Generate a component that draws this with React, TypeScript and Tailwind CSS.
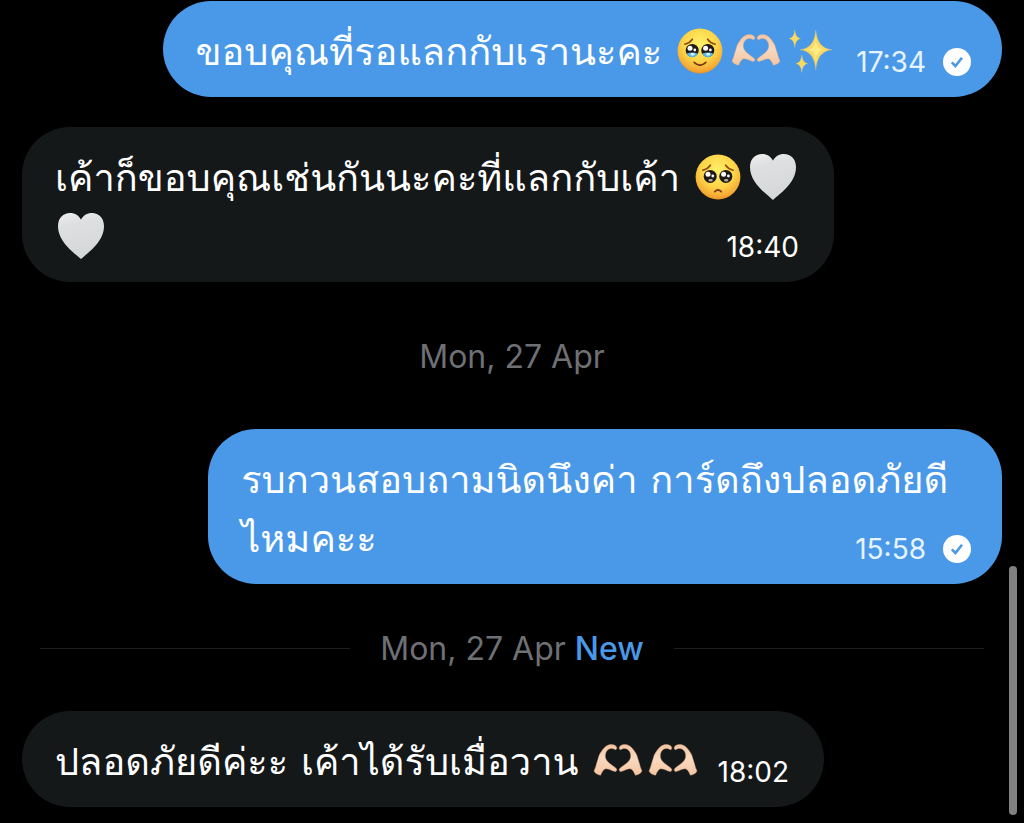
import { useId, type ReactNode } from 'react'
import clsx from 'clsx'

type EmojiName = 'tears' | 'pleading' | 'hands' | 'sparkles' | 'heart'

interface Line {
  text?: string
  emojis?: EmojiName[]
}

interface Message {
  id: number
  mine?: boolean
  lines: Line[]
  time: string
}

const FIRST_DAY: Message[] = [
  {
    id: 1,
    mine: true,
    lines: [{ text: 'ขอบคุณที่รอแลกกับเรานะคะ', emojis: ['tears', 'hands', 'sparkles'] }],
    time: '17:34',
  },
  {
    id: 2,
    lines: [
      { text: 'เค้าก็ขอบคุณเช่นกันนะคะที่แลกกับเค้า', emojis: ['pleading', 'heart'] },
      { emojis: ['heart'] },
    ],
    time: '18:40',
  },
]

const SECOND_DAY: Message[] = [
  {
    id: 3,
    mine: true,
    lines: [{ text: 'รบกวนสอบถามนิดนึงค่า การ์ดถึงปลอดภัยดี' }, { text: 'ไหมคะะ' }],
    time: '15:58',
  },
]

const NEW_MESSAGES: Message[] = [
  {
    id: 4,
    lines: [{ text: 'ปลอดภัยดีค่ะะ เค้าได้รับเมื่อวาน', emojis: ['hands', 'hands'] }],
    time: '18:02',
  },
]

function EmojiSvg({ label, children }: { label: string; children: ReactNode }) {
  return (
    <svg viewBox="0 0 46 46" role="img" aria-label={label} className="mx-[3px] size-[46px] shrink-0 overflow-visible">
      {children}
    </svg>
  )
}

function Face({ tears }: { tears?: boolean }) {
  const id = useId()
  const eyes = [15.2, 30.8]
  return (
    <EmojiSvg label={tears ? 'face holding back tears' : 'pleading face'}>
      <defs>
        <radialGradient id={id} cx="0.5" cy="0.35" r="0.68">
          <stop offset="0" stopColor="#fff06a" />
          <stop offset="0.55" stopColor="#fdd548" />
          <stop offset="0.85" stopColor="#f5ab35" />
          <stop offset="1" stopColor="#e58a22" />
        </radialGradient>
      </defs>
      <circle cx="23" cy="23" r="22.4" fill={`url(#${id})`} />
      {eyes.map((x) => (
        <g key={x}>
          <circle cx={x} cy="22.4" r="6.5" fill="#20191a" />
          {tears && <path d={`M${x - 5.5} 25.5 Q${x} 23.5 ${x + 5.5} 25.5 Q${x + 3} 29.5 ${x} 29.2 Q${x - 3} 29.5 ${x - 5.5} 25.5Z`} fill="#58b9e8" />}
          <circle cx={x - 2.2} cy="20.2" r="2.5" fill="#fff" />
          <circle cx={x + 2.6} cy="22" r="1.4" fill="#fff" />
          <ellipse cx={x + 0.4} cy="26.2" rx="2.2" ry="1.2" fill={tears ? '#d8f4ff' : '#b9aaa4'} />
        </g>
      ))}
      <path d="M7.8 16.2 Q12.5 15.2 15.4 11.2 M38.2 16.2 Q33.5 15.2 30.6 11.2" fill="none" stroke="#8a4b12" strokeWidth="1.6" strokeLinecap="round" />
      <path
        d={tears ? 'M17.2 34.4 Q23 40.2 28.8 34.4' : 'M19.8 37.6 Q23 34.4 26.2 37.6'}
        fill="none"
        stroke="#7d3d10"
        strokeWidth="1.8"
        strokeLinecap="round"
      />
    </EmojiSvg>
  )
}

function HeartHands() {
  const id = useId()
  const hand =
    'M0 27 C1.6 24 2.2 20.5 3.4 17 C4.6 13.4 5 10.6 7 8 C9 4.8 11.4 2 14.4 1 C17 .2 19.6 .4 21.2 1.6 C22.8 2.8 23.2 4.2 22.4 5.2 C21.6 6.2 20.4 5.2 19.2 4.7 C16.4 3.8 13 5.2 11.8 8.8 C11 11.6 11 14 12.6 16.2 C14.8 19.4 19.2 21.8 22 24.2 C23.4 25.6 22.8 27.8 20.8 27.4 C17.6 26.8 15 24.8 11.8 24.8 C9.2 25.2 8 28.6 6.6 31.2 C4.4 31 1 29.6 0 27Z'
  return (
    <EmojiSvg label="heart hands">
      <defs>
        <linearGradient id={id} x1="0" y1="0" x2="0" y2="1">
          <stop offset="0" stopColor="#f2c5a2" />
          <stop offset="0.45" stopColor="#f9dac0" />
          <stop offset="1" stopColor="#f3c4a2" />
        </linearGradient>
      </defs>
      {['translate(0 6)', 'translate(48 6) scale(-1 1)'].map((t) => (
        <path key={t} transform={t} d={hand} fill={`url(#${id})`} stroke="#dba483" strokeWidth="0.4" />
      ))}
    </EmojiSvg>
  )
}

function Sparkles() {
  return (
    <EmojiSvg label="sparkles">
      <g transform="translate(2 -1)">
        <g fill="#f9da62" stroke="#e9c560" strokeWidth="0.3">
          <path d="M26.8 3 Q28 21.4 43 22.8 Q28 24.2 26.8 43 Q25.6 24.2 11 22.8 Q25.6 21.4 26.8 3Z" />
          <path d="M5.8 3 Q6.4 10.6 11.4 11.6 Q6.4 12.6 5.8 20.6 Q5.2 12.6 0.2 11.6 Q5.2 10.6 5.8 3Z" />
          <path d="M12.8 28 Q13.4 35.6 18.6 36.6 Q13.4 37.6 12.8 45.4 Q12.2 37.6 7 36.6 Q12.2 35.6 12.8 28Z" />
        </g>
        <path d="M26.8 13 Q27.6 21.6 34 22.8 Q27.6 24 26.8 33 Q26 24 19.6 22.8 Q26 21.6 26.8 13Z" fill="#fdeb86" />
      </g>
    </EmojiSvg>
  )
}

function WhiteHeart() {
  const id = useId()
  return (
    <EmojiSvg label="white heart">
      <defs>
        <linearGradient id={id} x1="0" y1="0" x2="0.2" y2="1">
          <stop offset="0" stopColor="#efefef" />
          <stop offset="0.3" stopColor="#dedfe0" />
          <stop offset="1" stopColor="#d6d7d8" />
        </linearGradient>
      </defs>
      <path
        d="M23 46 C16 39.5 0 29 0 13 C0 5 5.4 0 12 0 C17 0 21 2.4 23 6.8 C25 2.4 29 0 34 0 C40.6 0 46 5 46 13 C46 29 30 39.5 23 46Z"
        fill={`url(#${id})`}
      />
    </EmojiSvg>
  )
}

function Emoji({ name }: { name: EmojiName }) {
  if (name === 'hands') return <HeartHands />
  if (name === 'sparkles') return <Sparkles />
  if (name === 'heart') return <WhiteHeart />
  return <Face tears={name === 'tears'} />
}

function SentIcon() {
  return (
    <svg viewBox="0 0 28 28" role="img" aria-label="Sent" className="-mr-1 size-7 shrink-0">
      <circle cx="14" cy="14" r="14" fill="#fff" />
      <path d="M8.8 14.4 L12.4 18 L19 9.8" fill="none" stroke="#4a99e9" strokeWidth="2.6" />
    </svg>
  )
}

function Bubble({ message }: { message: Message }) {
  const { mine, lines, time } = message
  return (
    <li
      className={clsx(
        'w-fit rounded-[48px] pt-[21px] pr-[35px] pb-4 pl-[33px] text-white',
        mine ? 'self-end bg-[#4a99e9]' : 'self-start bg-[#151819]',
        lines.length > 1 && 'min-w-[81%]',
      )}
    >
      {lines.map((line, i) => (
        <div key={i} className="flex items-end justify-between gap-5">
          <p className="h-[59px] font-[Loma,'Noto_Sans',sans-serif] text-[38px] leading-[59px] whitespace-nowrap">
            {line.text}
            {line.emojis && (
              <span className={clsx('inline-flex gap-[3px] align-[-9px]', line.text && 'ml-3')}>
                {line.emojis.map((name, j) => (
                  <Emoji key={j} name={name} />
                ))}
              </span>
            )}
          </p>
          {i === lines.length - 1 && (
            <div className="flex items-center gap-[17px] pb-[3px]">
              <time className={clsx('text-[28px] leading-8', mine && 'text-[#e6f4ff]')}>{time}</time>
              {mine && <SentIcon />}
            </div>
          )}
        </div>
      ))}
    </li>
  )
}

function MessageList({ messages }: { messages: Message[] }) {
  return (
    <ul className="flex flex-col gap-[30px]">
      {messages.map((m) => (
        <Bubble key={m.id} message={m} />
      ))}
    </ul>
  )
}

export default function App() {
  return (
    <main className="relative min-h-screen bg-black px-[22px] pt-px pb-4 font-[Inter,'Noto_Sans',sans-serif]">
      <MessageList messages={FIRST_DAY} />
      <div className="flex h-[147px] items-center justify-center pt-0.5 text-[32px] text-[#6e7074]">Mon, 27 Apr</div>
      <MessageList messages={SECOND_DAY} />
      <div className="flex h-[127px] items-center gap-[30px] px-[18px] pt-0.5 text-[32px] text-[#6e7074]">
        <hr className="flex-1 border-[#1b1d1f]" />
        <h2>
          Mon, 27 Apr <span className="font-medium text-[#4a99e9]">New</span>
        </h2>
        <hr className="flex-1 border-[#1b1d1f]" />
      </div>
      <MessageList messages={NEW_MESSAGES} />
      <div className="absolute right-[7px] bottom-2 h-[249px] w-2 rounded-full bg-[#808080]" />
    </main>
  )
}
